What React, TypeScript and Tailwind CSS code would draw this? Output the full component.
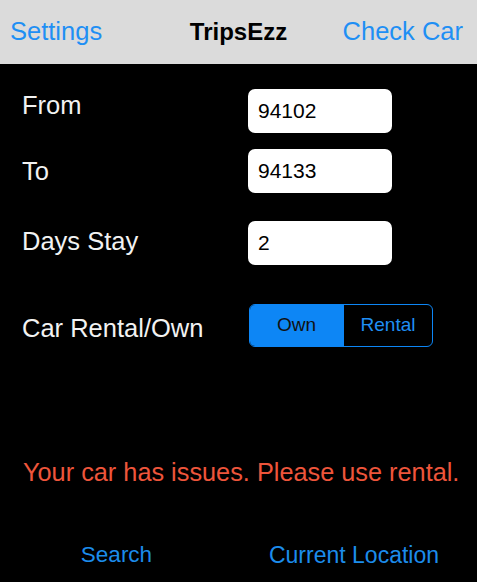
import React, { useState } from 'react';

const FONT = "font-['Liberation_Sans',Arial,sans-serif]";

function FieldRow({
  label,
  value,
  className,
  labelClass,
}: {
  label: string;
  value: string;
  className?: string;
  labelClass?: string;
}) {
  return (
    <div className={`flex items-center h-[44px] ${className ?? ''}`}>
      <span className={`w-[226px] text-[25.5px] text-[#f2f2f2] ${labelClass ?? ''}`}>{label}</span>
      <input
        defaultValue={value}
        className="w-[144px] h-[44px] rounded-[7px] bg-white pl-[10px] text-[21px] text-black focus:outline-none"
      />
    </div>
  );
}

export default function App() {
  const [mode, setMode] = useState<'own' | 'rental'>('own');

  return (
    <div className={`w-[477px] h-[582px] bg-black flex flex-col ${FONT}`}>
      <header className="h-16 shrink-0 bg-[#dbdbdb] grid grid-cols-[1fr_auto_1fr] items-center px-[10px]">
        <button type="button" className="justify-self-start text-[25.5px] text-[#1f8ff4] leading-none">
          Settings
        </button>
        <h1 className="text-[24px] font-bold text-black leading-none">TripsEzz</h1>
        <button type="button" className="justify-self-end text-[25.5px] text-[#1f8ff4] leading-none mr-[4px]">
          Check Car
        </button>
      </header>

      <div className="pl-[22px] pt-[25px] flex flex-col">
        <FieldRow label="From" value="94102" labelClass="mb-[12px]" />
        <FieldRow label="To" value="94133" className="mt-[16px]" />
        <FieldRow label="Days Stay" value="2" className="mt-[28px]" labelClass="mb-[4px]" />

        <div className="flex items-center h-[43px] mt-[39px]">
          <span className="w-[227px] text-[25.5px] text-[#f2f2f2] mt-[6px]">Car Rental/Own</span>
          <div className="flex w-[184px] h-[43px] rounded-[6px] border-[1.5px] border-[#0d86f5] overflow-hidden">
            <button
              type="button"
              onClick={() => setMode('own')}
              className={`w-[93px] text-[19px] ${
                mode === 'own' ? 'bg-[#0d86f5] text-[#111]' : 'text-[#1f8ff4]'
              }`}
            >
              Own
            </button>
            <button
              type="button"
              onClick={() => setMode('rental')}
              className={`flex-1 text-[19px] border-l-[1.5px] border-[#0d86f5] ${
                mode === 'rental' ? 'bg-[#0d86f5] text-[#111]' : 'text-[#1f8ff4]'
              }`}
            >
              Rental
            </button>
          </div>
        </div>

        <p className="mt-[110px] ml-[1px] text-[25.3px] leading-[30px] text-[#ee553b]">
          Your car has issues. Please use rental.
        </p>
      </div>

      <div className="grid grid-cols-[233px_1fr] mt-[54px]">
        <button type="button" className="text-[22.5px] leading-[28px] text-[#1c8ceb]">
          Search
        </button>
        <button type="button" className="text-[23px] leading-[28px] text-[#1c8ceb] mr-[2px]">
          Current Location
        </button>
      </div>
    </div>
  );
}
